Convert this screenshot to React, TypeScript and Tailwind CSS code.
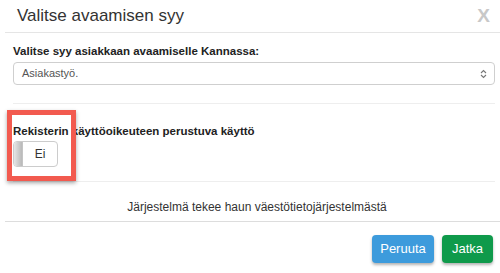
import React from "react";

export default function App() {
  return (
    <div className="relative w-[500px] h-[273px] overflow-hidden bg-white text-[#333] font-['Liberation_Sans',Arial,sans-serif]">
      {/* Otsikko */}
      <div className="ml-[5px] h-[33px] border-b border-[#e5e5e5] flex items-center justify-between pl-[12px] pr-[10px]">
        <h2 className="text-[17px] leading-[20px] text-[#333]">Valitse avaamisen syy</h2>
        <span className="text-[19px] leading-[20px] font-bold text-[#c8c8c8]">X</span>
      </div>

      {/* Sisältö */}
      <div className="pl-[13px] pr-[5px] pt-[11px]">
        <label className="block text-[11.5px] leading-[14px] font-bold text-[#222]">
          Valitse syy asiakkaan avaamiselle Kannassa:
        </label>
        <div className="mt-[4px] h-[23px] border border-[#cfcfcf] rounded-[4px] flex items-center justify-between pl-[8px] pr-[7px]">
          <span className="text-[11px] text-[#555]">Asiakastyö.</span>
          <svg width="7" height="10" viewBox="0 0 7 10" fill="none" stroke="#777" strokeWidth="1.1">
            <path d="M1 4 L3.5 1.5 L6 4" />
            <path d="M1 6 L3.5 8.5 L6 6" />
          </svg>
        </div>

        <div className="mt-[18px] border-t border-[#eeeeee]" />

        <div className="mt-[20px] text-[11.5px] leading-[14px] font-bold text-[#222]">
          Rekisterin käyttöoikeuteen perustuva käyttö
        </div>
        <div className="mt-[3px] w-[45px] h-[26px] border border-[#cccccc] rounded-[4px] flex overflow-hidden">
          <div className="w-[9px] h-full bg-gradient-to-r from-[#e6e6e6] to-[#b9b9b9] border-r border-[#c4c4c4]" />
          <div className="flex-1 flex items-center justify-center text-[12px] text-[#333]">Ei</div>
        </div>

        <div className="mt-[14px] border-t border-[#eeeeee]" />

        <p className="mt-[18px] pl-[6px] text-center text-[12px] leading-[14px] text-[#333]">
          Järjestelmä tekee haun väestötietojärjestelmästä
        </p>
      </div>

      <div className="mt-[7px] ml-[5px] border-t border-[#dddddd]" />

      {/* Painikkeet */}
      <div className="mt-[13px] flex justify-end gap-[8px] pr-[7px]">
        <button className="h-[28px] w-[62px] rounded-[4px] bg-[#3d9bdc] text-white text-[13px] shadow-[0_2px_3px_rgba(0,0,0,0.3)]">
          Peruuta
        </button>
        <button className="h-[28px] w-[51px] rounded-[4px] bg-[#0f9a4b] text-white text-[13px] shadow-[0_2px_3px_rgba(0,0,0,0.3)]">
          Jatka
        </button>
      </div>

      {/* Korostuslaatikko */}
      <div className="absolute left-[7px] top-[110px] w-[69px] h-[71px] border-[5px] border-[#f25a4f] shadow-[0_2px_4px_rgba(0,0,0,0.35)]" />
    </div>
  );
}
